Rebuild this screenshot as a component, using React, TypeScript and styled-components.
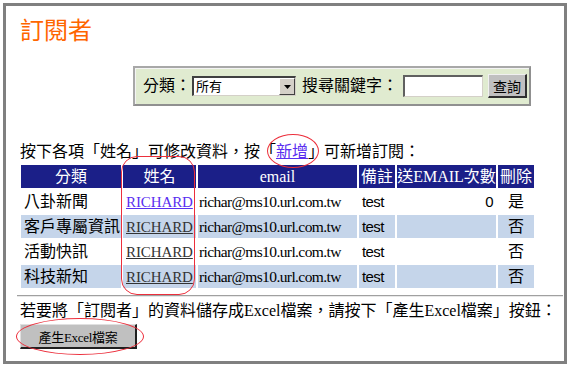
import styled, { createGlobalStyle } from "styled-components";

const GlobalStyle = createGlobalStyle`
  html, body {
    margin: 0;
    padding: 0;
    background: #ffffff;
  }
  body {
    font-family: "Liberation Serif", "Noto Sans CJK TC", serif;
    font-size: 16px;
    color: #000000;
  }
`;

const rows = [
  { category: "八卦新聞", visited: false, count: "0", del: "是" },
  { category: "客戶專屬資訊", visited: true, count: "", del: "否" },
  { category: "活動快訊", visited: true, count: "", del: "否" },
  { category: "科技新知", visited: true, count: "", del: "否" },
];

export default function App() {
  return (
    <>
      <GlobalStyle />
      <Frame>
        <Title>訂閱者</Title>

        <SearchPanel>
          <Label>分類：</Label>
          <FakeSelect>
            <span>所有</span>
            <SelectArrow>
              <svg width="7" height="4" viewBox="0 0 7 4">
                <path d="M0 0h7L3.5 4z" fill="#000" />
              </svg>
            </SelectArrow>
          </FakeSelect>
          <Label>搜尋關鍵字：</Label>
          <TextBox type="text" />
          <Button3D>查詢</Button3D>
        </SearchPanel>

        <Hint>
          按下各項「姓名」可修改資料，按「<Link href="#">新增</Link>」可新增訂閱：
        </Hint>

        <Table>
          <colgroup>
            <col style={{ width: 100 }} />
            <col style={{ width: 73 }} />
            <col style={{ width: 159 }} />
            <col style={{ width: 36 }} />
            <col style={{ width: 99 }} />
            <col style={{ width: 36 }} />
          </colgroup>
          <thead>
            <tr>
              <Th>分類</Th>
              <Th>姓名</Th>
              <Th>email</Th>
              <Th>備註</Th>
              <Th>送EMAIL次數</Th>
              <Th>刪除</Th>
            </tr>
          </thead>
          <tbody>
            {rows.map((r, i) => (
              <tr key={i}>
                <Td $shade={i % 2 === 1}>{r.category}</Td>
                <Td $shade={i % 2 === 1}>
                  <NameLink href="#" $visited={r.visited}>
                    RICHARD
                  </NameLink>
                </Td>
                <Td $shade={i % 2 === 1}>
                  <Email>richar@ms10.url.com.tw</Email>
                </Td>
                <Td $shade={i % 2 === 1}>
                  <Note>test</Note>
                </Td>
                <Td $shade={i % 2 === 1} $align="right">
                  <Note>{r.count}</Note>
                </Td>
                <Td $shade={i % 2 === 1} $align="center">
                  {r.del}
                </Td>
              </tr>
            ))}
          </tbody>
        </Table>

        <Rule />

        <Hint2>
          若要將「訂閱者」的資料儲存成Excel檔案，請按下「產生Excel檔案」按鈕：
        </Hint2>
        <ExportButton>產生Excel檔案</ExportButton>

        <Mark $left={261} $top={128} $w={52} $h={34} $round="50%" />
        <Mark $left={115} $top={150} $w={74} $h={139} $round="16px" />
        <Mark $left={10} $top={312} $w={128} $h={37} $round="50%" />
      </Frame>
    </>
  );
}

const Frame = styled.div`
  position: relative;
  box-sizing: border-box;
  margin: 3px 0 0 3px;
  width: 564px;
  height: 361px;
  border: 3px solid #808080;
  padding: 0 1px 0 14px;
`;

const Title = styled.h1`
  margin: 11px 0 0;
  font-family: "Noto Sans CJK TC", sans-serif;
  font-weight: 400;
  font-size: 24px;
  line-height: 24px;
  color: #ff6600;
`;

const SearchPanel = styled.div`
  box-sizing: border-box;
  display: flex;
  align-items: center;
  margin: 25px 0 0 113px;
  width: 398px;
  height: 40px;
  padding-left: 8px;
  background: #e0ebd0;
  border: 2px solid #a8a8a8;
  border-right-color: #909090;
  border-bottom-color: #909090;
  box-shadow: inset 1px 1px 0 #f4f4f4;
`;

const Label = styled.span`
  font-size: 16px;
  line-height: 18px;
  margin-right: 1px;
  & + & {
    margin-left: 6px;
  }
`;

const FakeSelect = styled.div`
  box-sizing: border-box;
  display: flex;
  align-items: center;
  justify-content: space-between;
  width: 104px;
  height: 20px;
  margin-right: 6px;
  background: #fff;
  border-top: 2px solid #404040;
  border-left: 2px solid #404040;
  border-right: 1px solid #d4d0c8;
  border-bottom: 1px solid #d4d0c8;
  font-size: 13px;
  padding-left: 2px;
  line-height: 16px;
`;

const SelectArrow = styled.span`
  box-sizing: border-box;
  display: flex;
  align-items: center;
  justify-content: center;
  width: 16px;
  height: 17px;
  background: #d4d0c8;
  border-top: 1px solid #fff;
  border-left: 1px solid #fff;
  border-right: 1px solid #404040;
  border-bottom: 1px solid #404040;
`;

const TextBox = styled.input`
  box-sizing: border-box;
  width: 80px;
  height: 22px;
  margin: 0 0 0 4px;
  padding: 0 2px;
  background: #fff;
  border-top: 2px solid #606060;
  border-left: 2px solid #606060;
  border-right: 1px solid #d4d0c8;
  border-bottom: 1px solid #d4d0c8;
  outline: none;
`;

const Button3D = styled.button`
  box-sizing: border-box;
  margin-left: 5px;
  width: 39px;
  height: 24px;
  padding: 0;
  background: #c0c0c0;
  border-top: 1px solid #f0f0f0;
  border-left: 1px solid #f0f0f0;
  border-right: 2px solid #303030;
  border-bottom: 2px solid #303030;
  font-family: "Noto Sans CJK TC", sans-serif;
  font-size: 14px;
  line-height: 18px;
  color: #000;
`;

const Hint = styled.p`
  margin: 38px 0 0;
  font-size: 16px;
  line-height: 16px;
  white-space: nowrap;
`;

const Link = styled.a`
  color: #5a2ef0;
  text-decoration: underline;
`;

const Table = styled.table`
  table-layout: fixed;
  border-collapse: separate;
  border-spacing: 2px;
  margin: 3px 0 0 -1px;
  width: 517px;
`;

const Th = styled.th`
  height: 23px;
  padding: 0;
  background: #1b1f88;
  color: #ffffff;
  font-weight: 400;
  font-size: 16px;
  line-height: 18px;
  text-align: center;
  white-space: nowrap;
  overflow: hidden;
`;

const Td = styled.td<{ $shade?: boolean; $align?: string }>`
  height: 23px;
  padding: 0 3px 0 3px;
  background: ${(p) => (p.$shade ? "#c5d5ea" : "transparent")};
  text-align: ${(p) => p.$align || "left"};
  font-size: 16px;
  line-height: 18px;
  white-space: nowrap;
  overflow: hidden;
  vertical-align: middle;
`;

const NameLink = styled.a<{ $visited?: boolean }>`
  font-family: "Liberation Serif", serif;
  font-size: 15px;
  letter-spacing: -0.1px;
  color: ${(p) => (p.$visited ? "#333333" : "#5a2ef0")};
  text-decoration: underline;
`;

const Email = styled.span`
  font-family: "Liberation Serif", serif;
  font-size: 15.5px;
  letter-spacing: -0.6px;
  margin-left: -2px;
`;

const Note = styled.span`
  font-family: "Liberation Sans", sans-serif;
  font-size: 15px;
  letter-spacing: -0.6px;
`;

const Rule = styled.div`
  margin: 5px 0 0 -3px;
  height: 0;
  border-top: 1px solid #a0a0a0;
  border-bottom: 1px solid #e8e8e8;
`;

const Hint2 = styled.p`
  margin: 6px 0 0;
  font-size: 16px;
  line-height: 16px;
  white-space: nowrap;
`;

const ExportButton = styled.button`
  box-sizing: border-box;
  display: block;
  margin-top: 5px;
  width: 117px;
  height: 25px;
  padding: 0;
  background: #c0c0c0;
  border-top: 1px solid #e0e0e0;
  border-left: 1px solid #e0e0e0;
  border-right: 2px solid #202020;
  border-bottom: 2px solid #202020;
  font-family: "Liberation Serif", "Noto Sans CJK TC", serif;
  font-size: 13px;
  letter-spacing: -0.3px;
  color: #000;
`;

const Mark = styled.div<{
  $left: number;
  $top: number;
  $w: number;
  $h: number;
  $round: string;
}>`
  position: absolute;
  left: ${(p) => p.$left}px;
  top: ${(p) => p.$top}px;
  width: ${(p) => p.$w}px;
  height: ${(p) => p.$h}px;
  box-sizing: border-box;
  border: 1px solid #ec2f3c;
  border-radius: ${(p) => p.$round};
  pointer-events: none;
`;
